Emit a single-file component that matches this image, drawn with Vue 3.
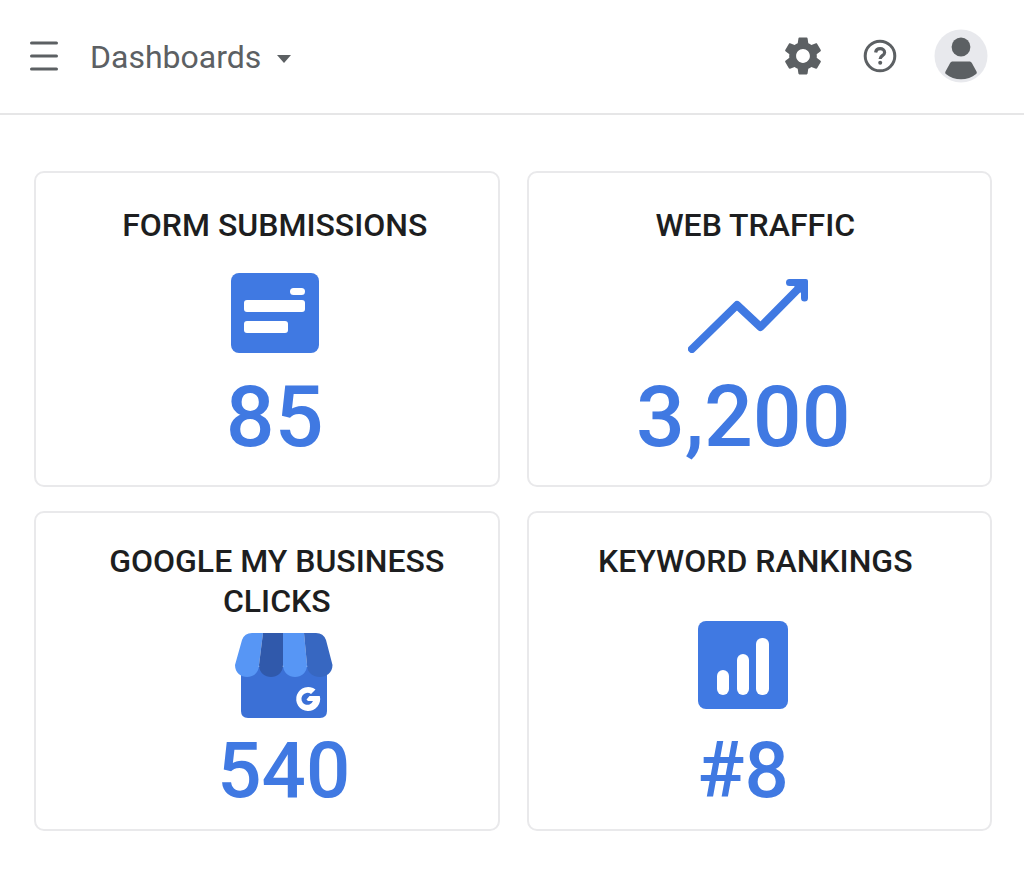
<template>
    <div class="page">
        <header class="topbar">
            <button class="icon-button menu" aria-label="Menu">
                <svg width="28" height="30" viewBox="0 0 28 30">
                    <path d="M1.5 2h25M1.5 15h25M1.5 28h25" fill="none" stroke="currentColor" stroke-width="3" stroke-linecap="round" />
                </svg>
            </button>
            <button class="switcher">
                Dashboards
                <svg width="14" height="8" viewBox="0 0 14 8">
                    <path d="M0 0h14L7 8z" fill="currentColor" />
                </svg>
            </button>
            <div class="actions">
                <button class="icon-button" aria-label="Settings">
                    <svg width="46" height="46" viewBox="0 0 24 24">
                        <path fill="currentColor" d="M19.14 12.94c.04-.3.06-.61.06-.94 0-.32-.02-.64-.07-.94l2.03-1.58c.18-.14.23-.41.12-.61l-1.92-3.32c-.12-.22-.37-.29-.59-.22l-2.39.96c-.5-.38-1.03-.7-1.62-.94l-.36-2.54c-.04-.24-.24-.41-.48-.41h-3.84c-.24 0-.43.17-.47.41l-.36 2.54c-.59.24-1.13.57-1.62.94l-2.39-.96c-.22-.08-.47 0-.59.22L2.74 8.87c-.12.21-.08.47.12.61l2.03 1.58c-.05.3-.09.63-.09.94s.02.64.07.94l-2.03 1.58c-.18.14-.23.41-.12.61l1.92 3.32c.12.22.37.29.59.22l2.39-.96c.5.38 1.03.7 1.62.94l.36 2.54c.05.24.24.41.48.41h3.84c.24 0 .44-.17.47-.41l.36-2.54c.59-.24 1.13-.56 1.62-.94l2.39.96c.22.08.47 0 .59-.22l1.92-3.32c.12-.22.07-.47-.12-.61l-2.01-1.58zM12 15.6c-1.98 0-3.6-1.62-3.6-3.6s1.62-3.6 3.6-3.6 3.6 1.62 3.6 3.6-1.62 3.6-3.6 3.6z" />
                    </svg>
                </button>
                <button class="icon-button" aria-label="Help">
                    <svg width="34" height="34" viewBox="0 0 34 34">
                        <circle cx="17" cy="17" r="14.8" fill="none" stroke="currentColor" stroke-width="3" />
                        <path d="M12.6 13.4c.4-2.4 2.2-3.7 4.5-3.7 2.6 0 4.5 1.5 4.5 3.7 0 3.2-4.5 3.3-4.5 6.6" fill="none" stroke="currentColor" stroke-width="3.2" />
                        <circle cx="17.2" cy="23.8" r="2" fill="currentColor" />
                    </svg>
                </button>
                <button class="icon-button" aria-label="Account">
                    <svg width="54" height="54" viewBox="0 0 54 54">
                        <circle cx="27" cy="27" r="26.5" fill="#e8e9ed" />
                        <circle cx="27" cy="18" r="9.4" fill="currentColor" />
                        <path d="M19 32.500h16c1.500 0 2.400.5 3 1.800l4.500 8.200c.5 1 .4 1.800-.4 2.500-8 7-22.200 7-30.200 0-.8-.7-.9-1.500-.4-2.500l4.500-8.200c.6-1.300 1.500-1.800 3-1.800z" fill="currentColor" />
                    </svg>
                </button>
            </div>
        </header>

        <main class="cards">
            <section v-for="card in cards" :key="card.id" class="card" :class="card.id">
                <h2>{{ card.title }}</h2>
                <div class="metric">
                    <div class="picture">
                        <svg v-if="card.id === 'forms'" width="88" height="80" viewBox="0 0 88 80">
                            <rect width="88" height="80" rx="8" fill="#4079e2" />
                            <rect x="59" y="15" width="15" height="7" rx="3.5" fill="#fff" />
                            <rect x="13" y="27" width="61" height="12" rx="3" fill="#fff" />
                            <rect x="13" y="48" width="44" height="12" rx="3" fill="#fff" />
                        </svg>
                        <svg v-else-if="card.id === 'traffic'" width="120" height="80" viewBox="0 0 120 80">
                            <path d="M4 76l45-44 23.5 22L112 14" fill="none" stroke="#4079e2" stroke-width="8" stroke-linecap="round" stroke-linejoin="round" />
                            <path d="M101.500 6H118q2 0 2 2v17a3.500 3.500 0 0 1-7 0v-5l-7-7h-4.500a3.500 3.500 0 0 1 0-7z" fill="#4079e2" />
                        </svg>
                        <svg v-else-if="card.id === 'business'" width="98" height="86" viewBox="0 0 98 86">
                            <path d="M6 34h86v44q0 7-7 7H13q-7 0-7-7z" fill="#3b70d6" />
                            <path d="M17 0h11l-4 32c0 16-24 16-24 0L7 7q2.500-7 10-7z" fill="#5796f5" />
                            <path d="M28 0h20v32c0 16-24 16-24 0z" fill="#3059ab" />
                            <path d="M48 0h21l3 32c0 16-24 16-24 0z" fill="#5796f5" />
                            <path d="M69 0h12q7.500 0 10 7l6.500 25c0 16-25.500 16-25.500 0z" fill="#3767c1" />
                            <path d="M80.500 56.500a12 12 0 1 0 4.300 6.500H74.500l-3 3.500 1.500 1.500h5a6 6 0 1 1-2-7z" fill="#fff" />
                        </svg>
                        <svg v-else width="90" height="88" viewBox="0 0 90 88">
                            <rect width="90" height="88" rx="8" fill="#4079e2" />
                            <rect x="19" y="49" width="12" height="25" rx="6" fill="#fff" />
                            <rect x="39" y="33" width="12" height="41" rx="6" fill="#fff" />
                            <rect x="58" y="17" width="13" height="57" rx="6" fill="#fff" />
                        </svg>
                    </div>
                    <p class="value">{{ card.value }}</p>
                </div>
            </section>
        </main>
    </div>
</template>

<script setup>
import { ref } from 'vue';

const cards = ref([
    { id: 'forms', title: 'FORM SUBMISSIONS', value: '85' },
    { id: 'traffic', title: 'WEB TRAFFIC', value: '3,200' },
    { id: 'business', title: 'GOOGLE MY BUSINESS CLICKS', value: '540' },
    { id: 'keywords', title: 'KEYWORD RANKINGS', value: '#8' }
]);
</script>

<style>
body {
    margin: 0;
    background-color: #fff;
}
</style>

<style scoped>
.page {
    font-family: Roboto, "Liberation Sans", sans-serif;
    color: #1d1e20;
}

.topbar {
    display: flex;
    align-items: center;
    box-sizing: border-box;
    height: 115px;
    padding: 0 36px 2px 30px;
    border-bottom: 2px solid #e6e6e7;
}

button {
    display: flex;
    align-items: center;
    padding: 0;
    border: none;
    background: none;
    color: #5c6063;
    font-family: inherit;
    cursor: pointer;
}

.icon-button svg {
    display: block;
}

.switcher {
    gap: 16px;
    padding-top: 2px;
    margin-left: 32px;
    font-size: 32px;
    line-height: 40px;
}

.switcher svg {
    margin-top: 4px;
}

.actions {
    display: flex;
    align-items: center;
    gap: 37px;
    margin-left: auto;
}

.cards {
    display: grid;
    grid-template-columns: 1fr 1fr;
    gap: 24px 27px;
    padding: 56px 32px 54px 34px;
}

.card {
    box-sizing: border-box;
    padding: 32px 32px 24px 48px;
    border: 2px solid #e9e9eb;
    border-radius: 10px;
    text-align: center;
}

.traffic,
.keywords {
    padding-right: 40px;
    padding-left: 32px;
}

.business,
.keywords {
    padding-top: 28px;
    padding-bottom: 18px;
}

.business {
    padding-left: 52px;
}

h2 {
    margin: 0;
    font-size: 32px;
    font-weight: 500;
    line-height: 40px;
}

.business h2,
.keywords h2 {
    min-height: 80px;
}

.metric {
    padding-top: 28px;
}

.traffic .metric,
.keywords .metric {
    padding-right: 24px;
}

.business .metric,
.keywords .metric {
    padding-top: 0;
}

.business .metric {
    padding-left: 14px;
}

.picture {
    display: flex;
    justify-content: center;
    height: 100px;
}

.traffic .picture {
    padding-left: 10px;
}

.business .picture,
.keywords .picture {
    height: 110px;
}

.business .picture {
    align-items: center;
}

.value {
    margin: 0;
    color: #4079e2;
    font-size: 86px;
    font-weight: 500;
    line-height: 88px;
}

.business .value,
.keywords .value {
    font-size: 78px;
    line-height: 80px;
}
</style>
